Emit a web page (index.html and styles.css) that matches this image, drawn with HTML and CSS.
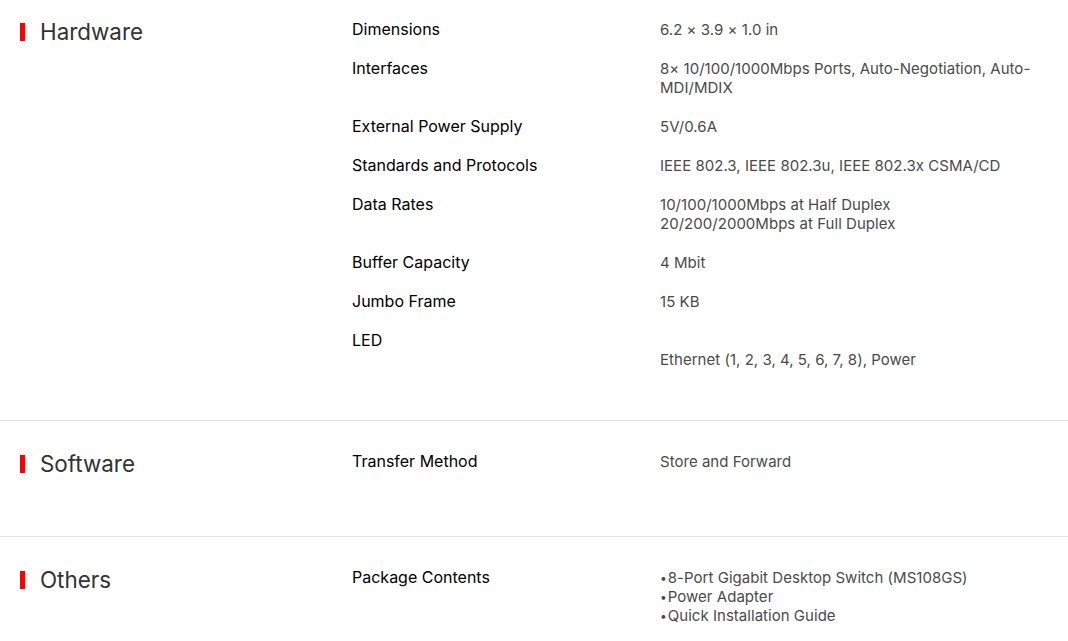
FILE: index.html
```html
<!DOCTYPE html>
<html lang="en">
<head>
<meta charset="utf-8">
<title>Specifications</title>
<link rel="stylesheet" href="styles.css">
</head>
<body>
<div class="specs">
  <section class="spec-section spec-section--first">
    <h2 class="spec-title">Hardware</h2>
    <dl class="spec-list">
      <div class="spec-row"><dt>Dimensions</dt><dd>6.2 × 3.9 × 1.0 in</dd></div>
      <div class="spec-row"><dt>Interfaces</dt><dd>8× 10/100/1000Mbps Ports, Auto-Negotiation, Auto-MDI/MDIX</dd></div>
      <div class="spec-row"><dt>External Power Supply</dt><dd>5V/0.6A</dd></div>
      <div class="spec-row"><dt>Standards and Protocols</dt><dd>IEEE 802.3, IEEE 802.3u, IEEE 802.3x CSMA/CD</dd></div>
      <div class="spec-row"><dt>Data Rates</dt><dd>10/100/1000Mbps at Half Duplex<br>20/200/2000Mbps at Full Duplex</dd></div>
      <div class="spec-row"><dt>Buffer Capacity</dt><dd>4 Mbit</dd></div>
      <div class="spec-row"><dt>Jumbo Frame</dt><dd>15 KB</dd></div>
      <div class="spec-row"><dt>LED</dt><dd><span class="spec-empty"></span>Ethernet (1, 2, 3, 4, 5, 6, 7, 8), Power</dd></div>
    </dl>
  </section>
  <section class="spec-section spec-section--tall">
    <h2 class="spec-title">Software</h2>
    <dl class="spec-list">
      <div class="spec-row"><dt>Transfer Method</dt><dd>Store and Forward</dd></div>
    </dl>
  </section>
  <section class="spec-section">
    <h2 class="spec-title">Others</h2>
    <dl class="spec-list">
      <div class="spec-row"><dt>Package Contents</dt><dd><span class="bullet">•</span>8-Port Gigabit Desktop Switch (MS108GS)<br><span class="bullet">•</span>Power Adapter<br><span class="bullet">•</span>Quick Installation Guide</dd></div>
    </dl>
  </section>
</div>
</body>
</html>
```

FILE: styles.css
```css
* { box-sizing: border-box; }
html, body { margin: 0; padding: 0; background: #fff; }
body {
  font-family: Inter, "Liberation Sans", Arial, sans-serif;
  color: #333;
  overflow: hidden;
}
.specs { width: 1068px; }
.spec-section {
  display: grid;
  grid-template-columns: 332px 1fr;
  align-items: start;
  padding: 31px 20px 30px 20px;
  border-top: 1px solid #e3e3e3;
}
.spec-section--first { border-top: none; padding-top: 20px; padding-bottom: 31px; }
.spec-section--tall { padding-bottom: 45px; }
.spec-title {
  margin: 0;
  display: flex;
  align-items: center;
  gap: 15px;
  font-size: 22.4px;
  font-weight: 400;
  line-height: 24px;
  color: #333;
}
.spec-title::before {
  content: "";
  width: 5px;
  height: 18px;
  background: #ff0000;
}
.spec-list { margin: 0; }
.spec-row {
  display: grid;
  grid-template-columns: 308px 1fr;
  padding-bottom: 20px;
  font-size: 15px;
  line-height: 19px;
}
.spec-row dt { color: #000; font-weight: 400; font-size: 16px; }
.spec-row dd { margin: 0; color: #4a4a4a; letter-spacing: 0.03px; }
.spec-empty { display: block; height: 19px; }
.bullet { font-size: 12px; margin-right: 1px; vertical-align: 1px; }
```
